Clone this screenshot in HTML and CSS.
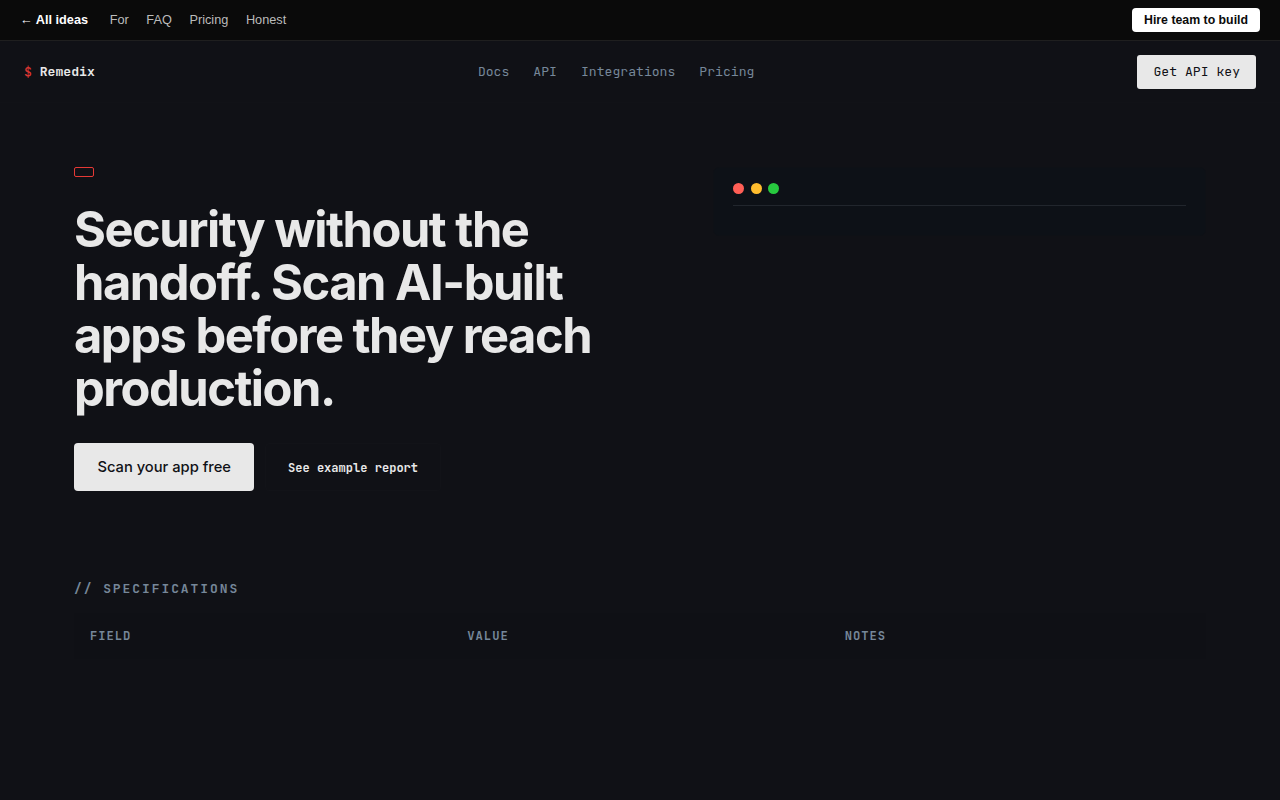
FILE: index.html
```html
<!DOCTYPE html>
<html lang="en">
<head>
<meta charset="UTF-8">
<meta name="viewport" content="width=device-width, initial-scale=1.0">
<title>Remedix</title>
<link rel="stylesheet" href="styles.css">
</head>
<body>

<div class="topbar">
<div class="topbar-links">
<a class="back" href="#">← All ideas</a>
<a href="#">For</a>
<a href="#">FAQ</a>
<a href="#">Pricing</a>
<a href="#">Honest</a>
</div>
<a class="hire" href="#">Hire team to build</a>
</div>

<header class="nav">
<a class="logo" href="#"><span class="prompt">$</span> Remedix</a>
<nav class="nav-links">
<a href="#">Docs</a>
<a href="#">API</a>
<a href="#">Integrations</a>
<a href="#">Pricing</a>
</nav>
<a class="nav-cta" href="#">Get API key</a>
</header>

<main class="container">
<section class="hero">
<div class="hero-text">
<span class="badge"></span>
<h1>Security without the handoff. Scan AI-built apps before they reach production.</h1>
<div class="actions">
<a class="btn-primary" href="#">Scan your app free</a>
<a class="btn-secondary" href="#">See example report</a>
</div>
</div>
<div class="terminal">
<div class="terminal-bar">
<span class="dot red"></span>
<span class="dot yellow"></span>
<span class="dot green"></span>
</div>
</div>
</section>

<section class="specs">
<h2>// SPECIFICATIONS</h2>
<div class="spec-head">
<span>FIELD</span>
<span>VALUE</span>
<span>NOTES</span>
</div>
</section>
</main>

</body>
</html>
```
FILE: styles.css
```css
* {
box-sizing: border-box;
}
body {
margin: 0;
background: #101116;
color: #e8e8e8;
font-family: Inter, sans-serif;
}
a {
color: inherit;
text-decoration: none;
}
.topbar {
display: flex;
align-items: center;
justify-content: space-between;
height: 41px;
padding: 0 20px;
background: #0a0a0a;
border-bottom: 1px solid #1f1f1f;
font-family: "Liberation Sans", Arial, sans-serif;
font-size: 12.72px;
line-height: 24px;
color: #bbb;
}
.topbar-links {
display: flex;
align-items: center;
gap: 17.6px;
}
.back {
color: #fff;
font-weight: 700;
margin-right: 4px;
}
.hire {
padding: 0 12px;
border-radius: 4px;
background: #fff;
color: #0a0a0a;
font-size: 12.32px;
font-weight: 700;
}
.nav {
display: flex;
align-items: center;
justify-content: space-between;
height: 62px;
padding: 0 24px;
border-bottom: 1px solid #111217;
font-family: "JetBrains Mono", "Liberation Mono", monospace;
font-size: 13.12px;
}
.logo {
font-weight: 700;
}
.prompt {
color: #d93632;
font-weight: 500;
}
.nav-links {
display: flex;
gap: 24px;
color: #768799;
}
.nav-cta {
padding: 0 16px;
line-height: 34px;
border-radius: 3px;
background: #e8e8e8;
color: #101116;
}
.container {
max-width: 1180px;
margin: 0 auto;
padding: 64px 24px;
}
.hero {
display: grid;
grid-template-columns: 1.2fr 1fr;
gap: 48px;
align-items: start;
}
.badge {
display: block;
width: 20px;
height: 10px;
border: 1px solid #e53935;
border-radius: 2px;
}
h1 {
margin: 26px 0 28px;
font-size: 48.8px;
line-height: 53px;
font-weight: 700;
letter-spacing: -0.03em;
}
.actions {
display: flex;
gap: 10.4px;
height: 48px;
}
.btn-primary {
padding: 0 23.4px;
line-height: 48px;
border-radius: 4px;
background: #e8e8e8;
color: #101116;
font-size: 14.72px;
font-weight: 500;
}
.btn-secondary {
padding: 0 22.2px;
line-height: 48px;
border: 1px solid #121318;
border-radius: 4px;
font-family: "JetBrains Mono", "Liberation Mono", monospace;
font-size: 12.05px;
font-weight: 600;
}
.terminal {
height: 69px;
padding: 15px 19.2px;
border: 1px solid #0e1116;
border-radius: 6px;
background: #0d1117;
}
.terminal-bar {
display: flex;
gap: 6.4px;
height: 23px;
border-bottom: 1px solid #21262d;
}
.dot {
width: 11px;
height: 11px;
border-radius: 50%;
}
.red {
background: #ff5f56;
}
.yellow {
background: #ffbd2e;
}
.green {
background: #27c93f;
}
.specs {
margin-top: 89px;
font-family: "JetBrains Mono", "Liberation Mono", monospace;
color: #768799;
}
.specs h2 {
margin: 0 0 16px;
font-size: 12.96px;
line-height: 17px;
font-weight: 600;
letter-spacing: 0.15em;
}
.spec-head {
display: grid;
grid-template-columns: repeat(3, 1fr);
background: #0f1015;
font-size: 12.16px;
font-weight: 700;
letter-spacing: 0.08em;
line-height: 46px;
}
.spec-head span {
padding: 0 16px;
}
```
